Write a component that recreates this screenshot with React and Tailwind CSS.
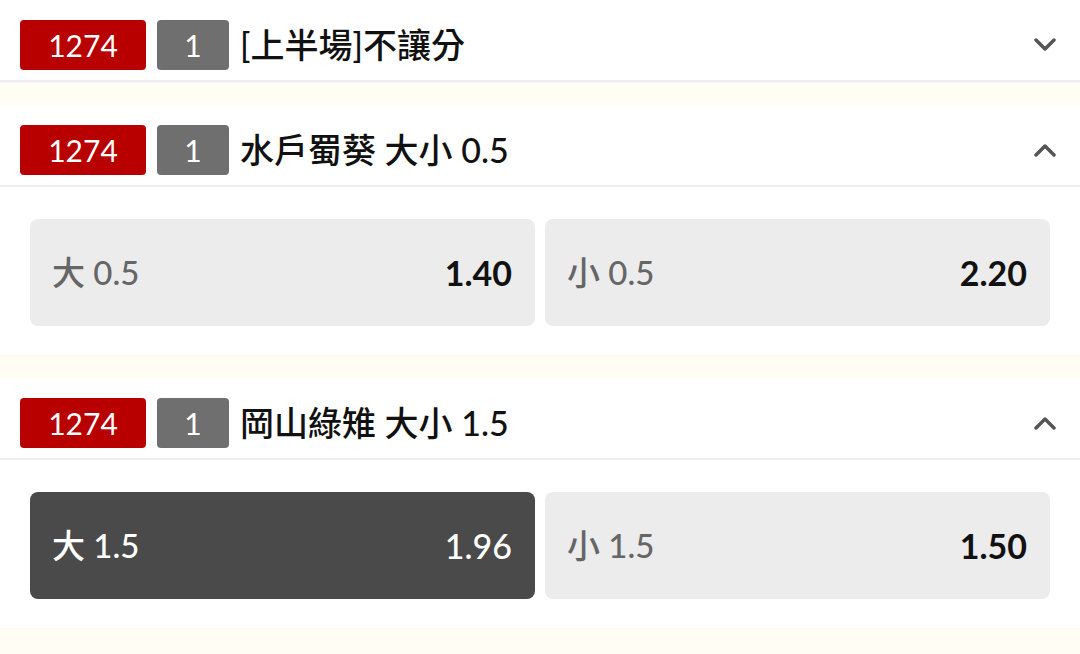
import React from "react";

const font = { fontFamily: 'Lato, "Noto Sans CJK TC", sans-serif' };

function Chevron({ up }) {
  return (
    <svg width="24" height="14" viewBox="0 0 24 14" className="shrink-0">
      <path
        d={up ? "M3 12 L12 3 L21 12" : "M3 2 L12 11 L21 2"}
        fill="none"
        stroke="#555555"
        strokeWidth="3.5"
        strokeLinecap="round"
        strokeLinejoin="round"
      />
    </svg>
  );
}

function Header({ title, up }) {
  return (
    <div className="flex h-[82px] items-center border-b-2 border-[#eeeef2] bg-white pb-[10px] pl-5 pr-[23px] pt-[20px]">
      <div className="flex h-[50px] w-[126px] items-center justify-center rounded-[4px] bg-[#b80000] text-[30px] text-white">
        1274
      </div>
      <div className="ml-[11px] flex h-[50px] w-[72px] items-center justify-center rounded-[4px] bg-[#6f6f6f] text-[30px] text-white">
        1
      </div>
      <div className="ml-[11px] flex-1 text-[34px] font-medium leading-none text-[#111]">{title}</div>
      <Chevron up={up} />
    </div>
  );
}

function Odd({ label, odd, selected }) {
  return (
    <div
      className={
        "flex h-[107px] flex-1 items-center justify-between rounded-[8px] pl-[22px] pr-[23px] " +
        (selected ? "bg-[#4a4a4a]" : "bg-[#ececec]")
      }
    >
      <span className={"text-[33px] font-medium " + (selected ? "text-white" : "text-[#666]")}>{label}</span>
      <span className={"text-[34px] " + (selected ? "font-medium text-white" : "font-bold text-[#111]")}>{odd}</span>
    </div>
  );
}

function Card({ title, up, children }) {
  return (
    <div className="bg-white shadow-[0_1px_2px_rgba(0,0,0,0.03)]">
      <Header title={title} up={up} />
      {children}
    </div>
  );
}

export default function App() {
  return (
    <div className="flex h-[654px] w-[1080px] flex-col gap-[23px] overflow-hidden bg-[#fffdf4]" style={font}>
      <Card title="[上半場]不讓分" up={false} />
      <Card title="水戶蜀葵 大小 0.5" up>
        <div className="flex gap-[10px] pb-[29px] pl-[30px] pr-[30px] pt-[32px]">
          <Odd label="大 0.5" odd="1.40" />
          <Odd label="小 0.5" odd="2.20" />
        </div>
      </Card>
      <Card title="岡山綠雉 大小 1.5" up>
        <div className="flex gap-[10px] pb-[29px] pl-[30px] pr-[30px] pt-[32px]">
          <Odd label="大 1.5" odd="1.96" selected />
          <Odd label="小 1.5" odd="1.50" />
        </div>
      </Card>
    </div>
  );
}
